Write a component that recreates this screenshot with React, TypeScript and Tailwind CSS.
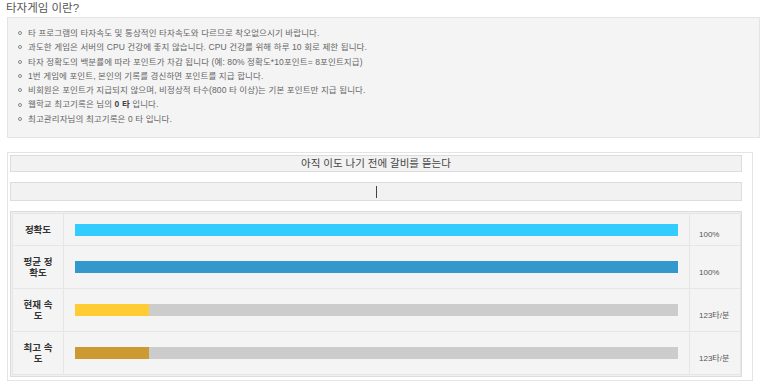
import React from 'react';

const rules = [
  '타 프로그램의 타자속도 및 통상적인 타자속도와 다르므로 착오없으시기 바랍니다.',
  '과도한 게임은 서버의 CPU 건강에 좋지 않습니다. CPU 건강를 위해 하루 10 회로 제한 됩니다.',
  '타자 정확도의 백분률에 따라 포인트가 차감 됩니다 (예: 80% 정확도*10포인트= 8포인트지급)',
  '1번 게임에 포인트, 본인의 기록를 경신하면 포인트를 지급 합니다.',
  '비회원은 포인트가 지급되지 않으며, 비정상적 타수(800 타 이상)는 기본 포인트만 지급 됩니다.',
];

const stats = [
  { label: '정확도', pct: 100, color: 'bg-[#33ccff]', value: '100%' },
  { label: '평균 정확도', pct: 100, color: 'bg-[#3399cc]', value: '100%' },
  { label: '현재 속도', pct: 12.25, color: 'bg-[#ffcc33]', value: '123타/분' },
  { label: '최고 속도', pct: 12.25, color: 'bg-[#cc9933]', value: '123타/분' },
];

const Bullet = () => (
  <span className="w-[4px] h-[4px] rounded-full border border-[#888] shrink-0 mr-[6px]" />
);

const App = () => {
  return (
    <div className="w-[760px] h-[386px] bg-white overflow-hidden font-['Liberation_Sans','Noto_Sans_CJK_KR',sans-serif]">
      <h1 className="pl-[6px] pt-[2px] text-[11.5px] leading-[13px] text-[#555]">타자게임 이란?</h1>

      {/* 안내 박스 */}
      <div className="mt-[2px] ml-[7px] w-[753px] h-[121px] border border-[#e4e4e4] bg-[#f4f4f4] pl-[10px] pt-[8px]">
        <ul className="text-[8.5px] leading-[14.3px] text-[#666] tracking-[0.1px]">
          {rules.map((r) => (
            <li key={r} className="flex items-center">
              <Bullet />
              {r}
            </li>
          ))}
          <li className="flex items-center">
            <Bullet />
            웹학교 최고기록은 님의&nbsp;<b className="text-[#444]">0 타</b>&nbsp;입니다.
          </li>
          <li className="flex items-center">
            <Bullet />
            최고관리자님의 최고기록은 0 타 입니다.
          </li>
        </ul>
      </div>

      {/* 게임 박스 */}
      <div className="mt-[14px] ml-[7px] w-[746px] h-[229px] border border-[#e4e4e4] pl-[2px] pt-[2px]">
        <div className="w-[732px] h-[17px] border border-[#dcdcdc] bg-[#f2f2f2] flex items-center justify-center text-[10.5px] text-[#444]">
          아직 이도 나기 전에 갈비를 뜯는다
        </div>
        <div className="mt-[10px] w-[732px] h-[19px] border border-[#dcdcdc] bg-[#f2f2f2] flex items-center justify-center">
          <span className="w-[1px] h-[12px] bg-[#444]" />
        </div>

        <div className="mt-[10px] w-[732px] border border-[#dcdcdc] bg-[#f0f0f0] p-[1px]">
          <div className="border-t border-l border-[#e6e6e6]">
            {stats.map((s) => (
              <div key={s.label} className="grid grid-cols-[51px_626px_51px] bg-[#f4f4f4]">
                <div className="border-r border-b border-[#e6e6e6] py-[10px] px-[8px] flex items-center justify-center">
                  <span className="text-center text-[9.5px] leading-[11px] font-bold text-[#333]">{s.label}</span>
                </div>
                <div className="border-r border-b border-[#e6e6e6] px-[11px] flex items-center">
                  <div className="w-full h-[12px] bg-[#cccccc]">
                    <div className={`h-full ${s.color}`} style={{ width: `${s.pct}%` }} />
                  </div>
                </div>
                <div className="border-r border-b border-[#e6e6e6] pl-[9px] pt-[11px] flex items-center text-[8px] text-[#555]">
                  {s.value}
                </div>
              </div>
            ))}
          </div>
        </div>
      </div>
    </div>
  );
};

export default App;
